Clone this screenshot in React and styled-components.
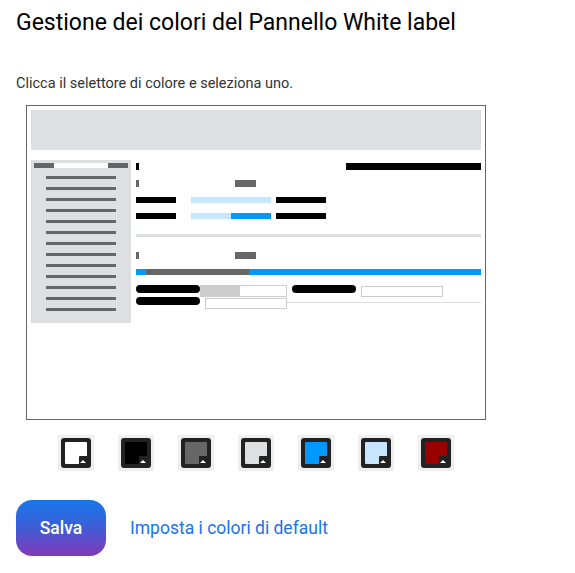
import React from "react";
import styled, { createGlobalStyle } from "styled-components";

const GlobalStyle = createGlobalStyle`
  body {
    margin: 0;
    background: #fff;
    font-family: Roboto, "Liberation Sans", Arial, sans-serif;
    color: #000;
  }
`;

const Page = styled.div`
  padding: 9px 16px 0;
  width: 575px;
  box-sizing: border-box;
`;

const Title = styled.h1`
  margin: 0;
  font-size: 23px;
  font-weight: 400;
  line-height: 28px;
`;

const Hint = styled.p`
  margin: 38px 0 0;
  font-size: 14.5px;
  line-height: 18px;
  color: #333;
`;

const Preview = styled.div`
  margin: 12px 0 0 10px;
  width: 460px;
  height: 315px;
  box-sizing: border-box;
  border: 1px solid #666;
  padding: 4px;
  display: flex;
  flex-direction: column;
  gap: 10px;
`;

const FakeHeader = styled.div`
  height: 40px;
  background: #dedfe1;
`;

const FakeBody = styled.div`
  display: flex;
  gap: 5px;
`;

const Sidebar = styled.div`
  width: 100px;
  height: 163px;
  box-sizing: border-box;
  background: #dedfe1;
  padding: 3px 3px 0;
  display: flex;
  flex-direction: column;
  gap: 8px;
`;

const SideTop = styled.div`
  display: flex;
  height: 5px;
`;

const SideLine = styled.div`
  width: 70px;
  height: 3px;
  margin-left: 12px;
  background: #666;
`;

const Main = styled.div`
  flex: 1;
  padding-top: 3px;
  display: flex;
  flex-direction: column;
`;

const Row = styled.div`
  display: flex;
  align-items: flex-start;
  margin-top: ${(p) => p.$mt ?? 0}px;
  justify-content: ${(p) => p.$justify || "flex-start"};
`;

const Bar = styled.div`
  flex: ${(p) => (p.$grow ? 1 : "none")};
  width: ${(p) => (p.$grow ? "auto" : `${p.$w}px`)};
  height: ${(p) => p.$h}px;
  background: ${(p) => p.$c};
  margin-left: ${(p) => p.$ml ?? 0}px;
  border-radius: ${(p) => p.$r ?? 0}px;
`;

const Divider = styled.div`
  height: 3px;
  background: #dedfe1;
  margin-top: 15px;
`;

const FakeInput = styled.div`
  width: ${(p) => p.$w}px;
  height: ${(p) => p.$h}px;
  box-sizing: border-box;
  border: 1px solid #ccc;
  margin-top: ${(p) => p.$mt ?? 0}px;
  margin-left: ${(p) => p.$ml ?? 0}px;
  background: #fff;
  display: flex;
`;

const InputFill = styled.div`
  width: 40px;
  margin: -1px 0 -1px -1px;
  background: #ccc;
  border-radius: 2px 0 0 2px;
`;

const HairLine = styled.div`
  flex: 1;
  height: 1px;
  margin-top: 5px;
  background: #ddd;
`;

const Swatches = styled.div`
  width: 460px;
  margin: 15px 0 0 10px;
  display: flex;
  justify-content: center;
  gap: 24px;
`;

const SwatchButton = styled.button`
  width: 36px;
  height: 36px;
  padding: 3px;
  border: none;
  background: #efefef;
  cursor: pointer;
`;

const SwatchFrame = styled.div`
  position: relative;
  width: 30px;
  height: 30px;
  box-sizing: border-box;
  padding: 4px;
  border-radius: 3px;
  background: #222;
`;

const SwatchColor = styled.div`
  width: 22px;
  height: 22px;
  border-radius: 1px;
  background: ${(p) => p.$color};
`;

const Corner = styled.div`
  position: absolute;
  right: 4px;
  bottom: 4px;
  width: 8px;
  height: 8px;
  background: #222;
  border-top-left-radius: 1px;

  &::after {
    content: "";
    position: absolute;
    left: 1px;
    bottom: 1px;
    border-left: 3px solid transparent;
    border-right: 3px solid transparent;
    border-bottom: 3px solid #fff;
  }
`;

const Actions = styled.div`
  margin-top: 29px;
  display: flex;
  align-items: center;
  gap: 24px;
`;

const SaveButton = styled.button`
  width: 90px;
  height: 56px;
  border: none;
  border-radius: 16px;
  background: linear-gradient(180deg, #1877e8 0%, #3a60d8 45%, #8439b8 100%);
  color: #fff;
  font-family: Roboto, "Liberation Sans", Arial, sans-serif;
  font-size: 17.5px;
  font-weight: 500;
  cursor: pointer;
`;

const DefaultLink = styled.a`
  color: #1a73e8;
  font-size: 17.5px;
  text-decoration: none;
  cursor: pointer;
`;

const colors = ["#ffffff", "#000000", "#666666", "#dedfe1", "#0099ff", "#c7e5fc", "#990000"];

const Swatch = ({ color }) => (
  <SwatchButton>
    <SwatchFrame>
      <SwatchColor $color={color} />
      <Corner />
    </SwatchFrame>
  </SwatchButton>
);

export default function App() {
  return (
    <>
      <GlobalStyle />
      <Page>
        <Title>Gestione dei colori del Pannello White label</Title>
        <Hint>Clicca il selettore di colore e seleziona uno.</Hint>

        <Preview>
          <FakeHeader />
          <FakeBody>
            <Sidebar>
              <SideTop>
                <Bar $w={20} $h={5} $c="#666" />
                <Bar $w={54} $h={5} $c="#fff" />
                <Bar $w={20} $h={5} $c="#666" />
              </SideTop>
              {Array.from({ length: 13 }).map((_, i) => (
                <SideLine key={i} />
              ))}
            </Sidebar>

            <Main>
              <Row $justify="space-between">
                <Bar $w={3} $h={7} $c="#000" />
                <Bar $w={135} $h={7} $c="#000" />
              </Row>
              <Row $mt={10}>
                <Bar $w={3} $h={7} $c="#666" />
                <Bar $w={21} $h={7} $c="#666" $ml={96} />
              </Row>
              <Row $mt={10}>
                <Bar $w={40} $h={6} $c="#000" />
                <Bar $w={80} $h={6} $c="#c7e5fc" $ml={15} />
                <Bar $w={50} $h={6} $c="#000" $ml={5} />
              </Row>
              <Row $mt={10}>
                <Bar $w={40} $h={6} $c="#000" />
                <Bar $w={40} $h={6} $c="#c7e5fc" $ml={15} />
                <Bar $w={40} $h={6} $c="#0099ff" />
                <Bar $w={50} $h={6} $c="#000" $ml={5} />
              </Row>
              <Divider />
              <Row $mt={15}>
                <Bar $w={3} $h={7} $c="#666" />
                <Bar $w={21} $h={7} $c="#666" $ml={96} />
              </Row>
              <Row $mt={10}>
                <Bar $w={10} $h={6} $c="#0099ff" />
                <Bar $w={103} $h={6} $c="#666" />
                <Bar $grow $h={6} $c="#0099ff" />
              </Row>
              <Row $mt={10}>
                <Bar $w={64} $h={8} $c="#000" $r={4} />
                <FakeInput $w={87} $h={12}>
                  <InputFill />
                </FakeInput>
                <Bar $w={64} $h={8} $c="#000" $r={4} $ml={5} />
                <FakeInput $w={82} $h={11} $mt={1} $ml={5} />
              </Row>
              <Row>
                <Bar $w={64} $h={8} $c="#000" $r={4} />
                <FakeInput $w={82} $h={11} $mt={1} $ml={5} />
                <HairLine />
              </Row>
            </Main>
          </FakeBody>
        </Preview>

        <Swatches>
          {colors.map((c) => (
            <Swatch key={c} color={c} />
          ))}
        </Swatches>

        <Actions>
          <SaveButton>Salva</SaveButton>
          <DefaultLink>Imposta i colori di default</DefaultLink>
        </Actions>
      </Page>
    </>
  );
}
